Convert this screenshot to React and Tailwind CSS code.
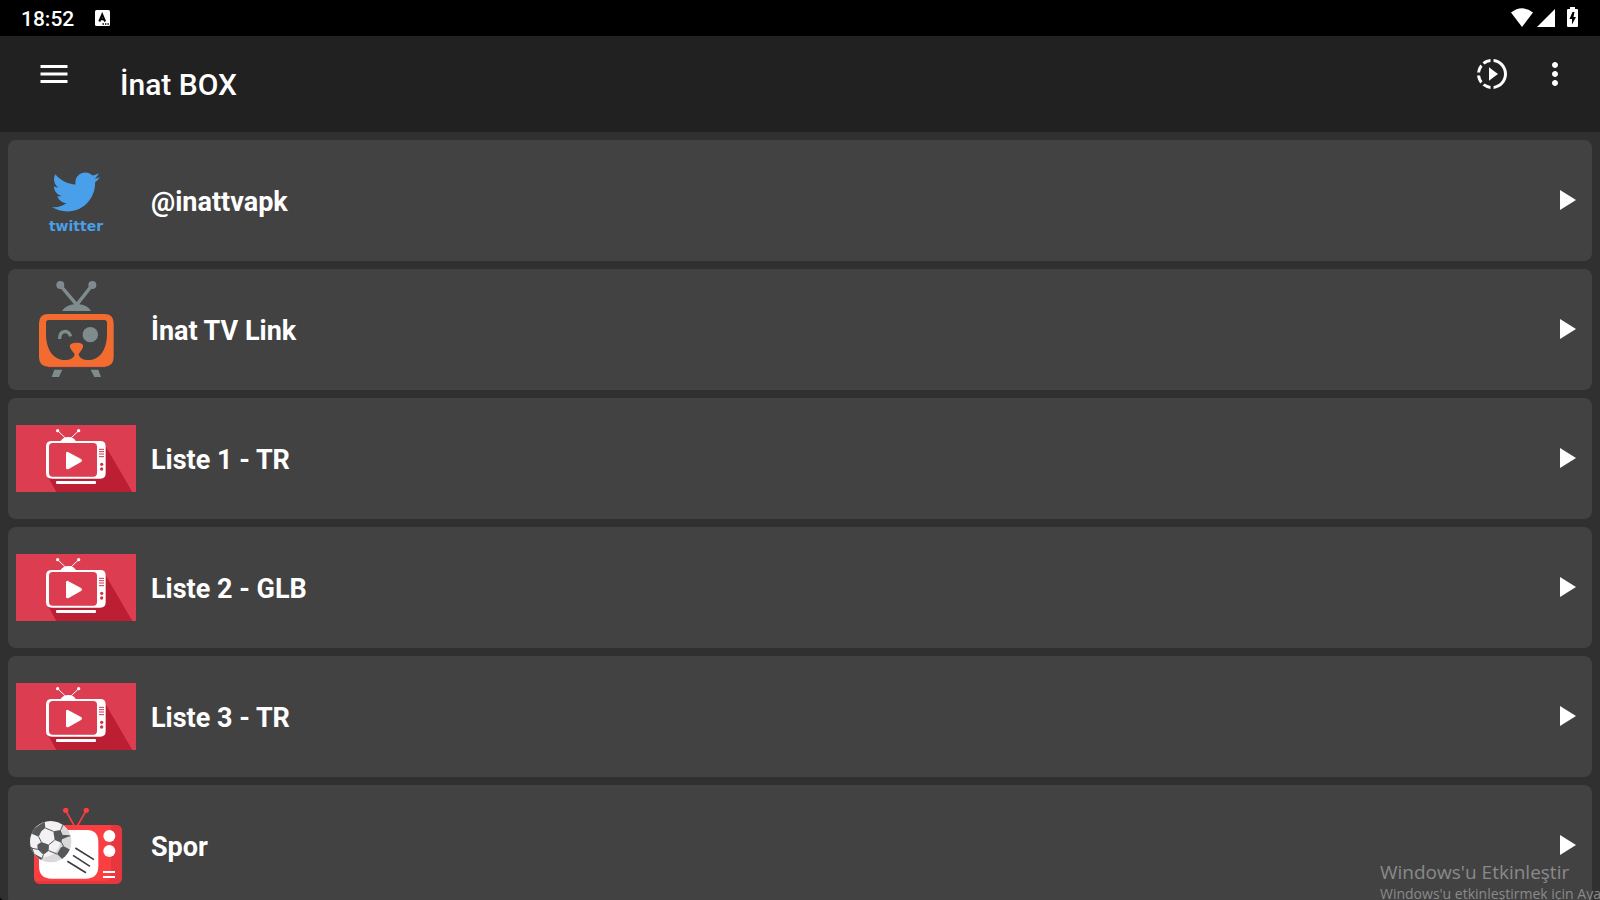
import { FaTwitter } from "react-icons/fa";
import { MdMenu, MdMoreVert, MdSlowMotionVideo } from "react-icons/md";

function TwitterArt() {
  return (
    <span className="flex w-full flex-col items-center gap-0.5 text-[#4a9fea]">
      <FaTwitter className="h-12 w-12" aria-hidden="true" />
      <span className="font-['DejaVu_Sans',sans-serif] text-sm leading-4 font-bold">twitter</span>
    </span>
  );
}

function InatTvArt() {
  return (
    <svg viewBox="48 21 360 363" className="w-full" aria-hidden="true">
      <g fill="#7f8c8d">
        <circle cx="181" cy="69" r="12" />
        <circle cx="277" cy="69" r="12" />
        <path d="M186 147 Q196 130 222 127 L178 74 L186 68 L230 120 L271 68 L279 74 L238 127 Q264 130 273 147Z" />
        <path d="M163 323H187L177 345H155Z M272 323H295L303 345H283Z" />
      </g>
      <path d="M144 314H316" stroke="#e0436a" strokeWidth="3" />
      <path
        fill="#f26c30"
        fillRule="evenodd"
        d="M145 156H313Q341 156 341 184V286Q341 314 313 314H145Q117 314 117 286V184Q117 156 145 156Z M146 174Q138 174 138 182V216C138 262 160 294 194 294C211 294 222 288 224 276C219 272 215 265 211 258C206 246 216 242 230 242C244 242 253 246 248 258C244 265 240 272 236 276C238 288 249 294 266 294C300 294 321 262 321 216V182Q321 174 313 174Z"
      />
      <path d="M179 231C178 202 207 203 212 223" fill="none" stroke="#7f8c8d" strokeWidth="10" />
      <circle cx="271" cy="218" r="23" fill="#7f8c8d" />
    </svg>
  );
}

function ListArt() {
  return (
    <svg viewBox="48 87 360 201" className="w-full" aria-hidden="true">
      <path fill="#dc3d50" d="M48 87H408V288H48Z" />
      <path fill="#bc1e34" d="M316 149L397 288H169L144 243L300 240Z" />
      <path
        fill="#dc3d50"
        d="M158 141H291V242H158Q147 242 147 231V152Q147 141 158 141Z"
      />
      <g fill="#fff">
        <circle cx="173" cy="104" r="5" />
        <circle cx="236" cy="104" r="5" />
        <path d="M181 136Q189 123 205 123Q221 123 228 136Z" />
        <path d="M173 104L197 127M236 104L212 127" stroke="#fff" strokeWidth="3" />
        <path
          fillRule="evenodd"
          d="M156 135H301Q317 135 317 151V232Q317 248 301 248H156Q138 248 138 232V151Q138 135 156 135Z M158 141Q147 141 147 152V231Q147 242 158 242H280Q291 242 291 231V152Q291 141 280 141Z"
        />
        <rect x="168" y="255" width="120" height="9" rx="3" />
        <path d="M198 172Q198 166 204 168L243 189Q249 193 243 198L206 219Q198 222 198 215Z" />
      </g>
      <path d="M297 160H312M297 167H312M297 174H312M297 182H312" stroke="#cf3347" strokeWidth="3" />
      <circle cx="305" cy="205" r="5" fill="#cf3347" />
      <circle cx="305" cy="219" r="5" fill="#cf3347" />
    </svg>
  );
}

function SportArt() {
  return (
    <svg viewBox="48 15 360 363" className="w-full" aria-hidden="true">
      <g fill="#fa3e42">
        <circle cx="197" cy="91" r="8" />
        <circle cx="259" cy="91" r="8" />
        <path d="M197 91L222 136M259 91L233 136" stroke="#fa3e42" strokeWidth="5" />
        <rect x="102" y="135" width="264" height="176" rx="18" />
      </g>
      <path fill="#e5373d" d="M333 135H348Q366 135 366 153V293Q366 311 348 311H120Q106 311 102 300Q108 304 120 303H314Q333 303 333 284Z" />
      <path d="M157 150H260Q295 150 295 186V258Q295 296 257 296H155Q117 296 117 258V190Q117 150 157 150Z" fill="#fff" />
      <circle cx="328" cy="168" r="18" fill="#fff" />
      <circle cx="328" cy="213" r="18" fill="#fff" />
      <path d="M309 276H345M309 291H345" stroke="#fff" strokeWidth="6" />
      <path d="M226 204L282 239M219 226L270 259M202 244L258 278" stroke="#3d3e42" strokeWidth="5" />
      <clipPath id="ball">
        <circle cx="152" cy="185" r="62" />
      </clipPath>
      <g clipPath="url(#ball)">
        <path fill="#f3f1f2" d="M88 122H216V248H88Z" />
        <path fill="#dad9da" d="M182 122H216V248H110L124 232C165 232 196 200 182 122Z" />
        <g fill="#55585b">
          <path d="M104 145L134 124L136 144L124 154L116 170L92 160Z" />
          <path d="M160 154L182 150L188 166L210 168L186 178L184 188L164 180Z" />
          <path d="M112 194L124 186L147 194L146 212L130 224L113 208Z" />
          <path d="M182 203L190 198L212 210L190 240L171 222Z" />
          <path d="M86 202L96 202L104 222L126 234L121 247L88 225Z" />
        </g>
        <path
          d="M136 144L160 154M116 170L124 186M90 204L113 208M164 180L147 194M146 212L171 222M130 224L126 236M184 186L190 198M182 150L190 132M188 166L216 168"
          fill="none"
          stroke="#55585b"
          strokeWidth="3"
        />
      </g>
    </svg>
  );
}

function StatusIcons() {
  return (
    <svg viewBox="0 0 68 22" className="h-[22px] w-[68px]" fill="#fff" aria-hidden="true">
      <path d="M0 5.5Q11 -3 22 5.5L11 20Z" />
      <path d="M44 2V20H26Z" />
      <path
        fillRule="evenodd"
        d="M59 0H64V2H66Q67 2 67 3V19Q67 20 66 20H57Q56 20 56 19V3Q56 2 57 2H59Z M61.5 5L58.5 12H61V17.5L65 10H62.5L63.5 5Z"
      />
    </svg>
  );
}

const channels = [
  { name: "@inattvapk", Art: TwitterArt },
  { name: "İnat TV Link", Art: InatTvArt },
  { name: "Liste 1 - TR", Art: ListArt },
  { name: "Liste 2 - GLB", Art: ListArt },
  { name: "Liste 3 - TR", Art: ListArt },
  { name: "Spor", Art: SportArt },
];

function ChannelRow({ name, Art }) {
  return (
    <li>
      <button
        type="button"
        className="flex h-[121px] w-full items-center rounded-lg bg-[#424242] pr-4 pl-2 text-left"
      >
        <span className="flex w-[120px] shrink-0 items-center">
          <Art />
        </span>
        <span className="grow pt-0.5 pl-[15px] text-[27px] leading-8 font-bold">{name}</span>
        <svg viewBox="0 0 16 21" className="h-[21px] w-4 shrink-0" fill="#fff" aria-hidden="true">
          <path d="M0 0L16 10L0 20Z" />
        </svg>
      </button>
    </li>
  );
}

export default function App() {
  return (
    <div className="bg-black">
      <div className="relative flex h-screen flex-col overflow-hidden rounded-bl-sm bg-[#303030] font-[Roboto,sans-serif] text-white">
        <div className="flex h-9 shrink-0 items-center justify-between bg-black px-[21px]">
          <div className="flex items-center gap-[21px]">
            <span className="pt-0.5 text-[21px] leading-6 font-medium">18:52</span>
            <svg viewBox="0 0 15 16" className="h-4 w-[15px]" aria-hidden="true">
              <rect width="15" height="16" rx="1.5" fill="#fff" />
              <path d="M4.3 11.5L7.2 4.5L10.1 11.5M5.3 9.3H9.1" fill="none" stroke="#000" strokeWidth="2" />
              <path d="M7.5 14H9M10 14H11.4M12.4 14H13.8" stroke="#000" strokeWidth="1.4" />
            </svg>
          </div>
          <StatusIcons />
        </div>

        <header className="flex h-24 shrink-0 items-start bg-[#212121] pt-5 pr-[27px] pl-9">
          <button type="button" aria-label="Menu">
            <MdMenu className="h-9 w-9" />
          </button>
          <h1 className="grow pt-[11px] pl-12 text-[30px] leading-9 font-medium">İnat BOX</h1>
          <div className="flex gap-[27px]">
            <button type="button" aria-label="Play">
              <MdSlowMotionVideo className="h-9 w-9" />
            </button>
            <button type="button" aria-label="More options">
              <MdMoreVert className="h-9 w-9" />
            </button>
          </div>
        </header>

        <main className="min-h-0 grow overflow-y-auto p-2 [scrollbar-width:none]">
          <ul className="flex flex-col gap-2">
            {channels.map((channel) => (
              <ChannelRow key={channel.name} {...channel} />
            ))}
          </ul>
        </main>

        <div className="pointer-events-none absolute right-0 -bottom-1 w-[220px] font-['Open_Sans',sans-serif] whitespace-nowrap text-[#8a8a8a]">
          <p className="text-[19px] leading-6">Windows'u Etkinleştir</p>
          <p className="text-[14px] leading-5">Windows'u etkinleştirmek için Aya</p>
        </div>
      </div>
    </div>
  );
}
